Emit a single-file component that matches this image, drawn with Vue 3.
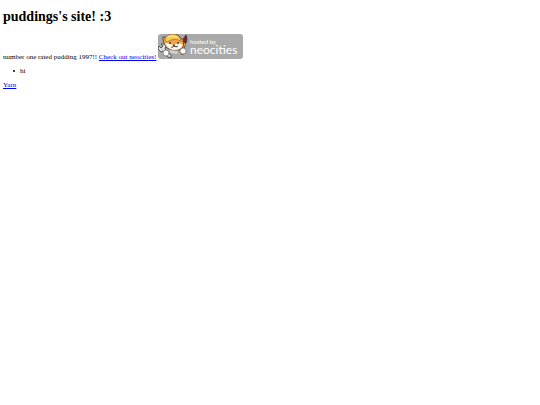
<template>
  <main class="page">
    <h1>puddings's site! :3</h1>
    <div class="intro">
      number one rated pudding 1997!!
      <a href="https://neocities.org">Check out neocities!</a>
      {{ ' ' }}
      <svg class="banner" viewBox="0 0 85 25" role="img" aria-label="hosted by neocities">
        <rect width="85" height="25" rx="3" fill="#a9a9a9" />
        <!-- cat -->
        <path
          d="M5 3L9 3Q12 0 17 0Q22 1 23 5L27 5L26 10Q26 14 21 16Q14 17 9 14Q5 11 5 3Z"
          fill="#f2a24a" stroke="#4b3526" stroke-width=".8"
        />
        <path d="M7 10Q9 8 12 10L15 11L18 10Q22 8 25 11Q24 15 18 16Q10 16 7 10Z" fill="#fff5e8" />
        <path d="M7 6Q7 1 14 0Q22 0 23 7Q18 4 13 6L9 8Z" fill="#f6c952" stroke="#8b602c" stroke-width=".6" />
        <path d="M10 3Q14 1 19 3" fill="none" stroke="#fff0a4" stroke-width=".9" />
        <path d="M12 8v2M20 8v2" stroke="#33251f" stroke-width="1.2" />
        <path d="M15 11h2l-1 1zM13 13q2 1 3-1q2 2 4 0" fill="#33251f" stroke="#33251f" stroke-width=".6" />
        <path d="M11 16L20 17L19 20L13 19Z" fill="#ededed" opacity=".6" />
        <!-- wrench -->
        <path
          d="M3 10L5 12L3 14L1 12L0 15L3 18L5 17L10 23L13 24L13 21L7 15L8 12L6 10Z"
          fill="#d5dadd" stroke="#3f4244" stroke-width=".8"
        />
        <circle cx="8" cy="19" r="3" fill="#fff" stroke="#5b514a" stroke-width=".6" />
        <!-- brush -->
        <path d="M27 8L24 21" stroke="#493126" stroke-width="2.2" />
        <path d="M27 8L24 21" stroke="#e9b66b" stroke-width="1" />
        <path d="M28 1Q30 5 28 9L25 8Q25 4 28 1Z" fill="#84232b" stroke="#38282a" stroke-width=".7" />
        <circle cx="25" cy="17" r="3" fill="#fff" stroke="#5b514a" stroke-width=".6" />
        <text x="32" y="10" class="hosted">hosted by</text>
        <text x="32" y="20" class="brand">neocities</text>
      </svg>
    </div>
    <ul>
      <li>hi</li>
    </ul>
    <a href="#yarn">Yarn</a>
  </main>
</template>

<script setup>
</script>

<style>
body {
  margin: 0;
  background: #fff;
}
</style>

<style scoped>
.page {
  padding: 9px 3px;
  font-family: "Liberation Serif", "Times New Roman", serif;
  font-size: 7px;
  line-height: 8px;
  color: #000;
}
h1 {
  margin: 0 0 9px;
  font-size: 14px;
  line-height: 16px;
}
a {
  color: #00e;
  text-decoration: underline;
}
.banner {
  width: 85px;
  height: 25px;
  vertical-align: baseline;
}
.hosted,
.brand {
  font-family: Lato, sans-serif;
  fill: #fff;
}
.hosted {
  font-size: 6px;
}
.brand {
  font-size: 12px;
}
ul {
  margin: 6px 0;
  padding-left: 10px;
  list-style: none;
}
li {
  display: flex;
  align-items: center;
  gap: 5px;
}
li::before {
  content: "";
  width: 2px;
  height: 2px;
  border-radius: 50%;
  background: #000;
}
</style>
